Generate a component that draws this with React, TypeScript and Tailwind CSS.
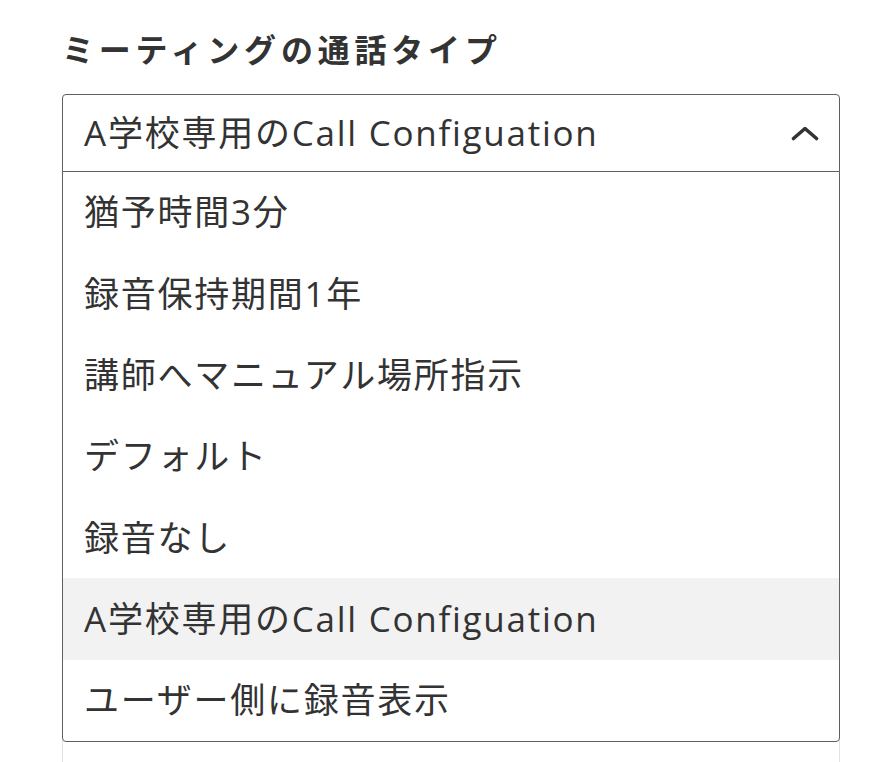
import * as React from "react";

const options = [
  "猶予時間3分",
  "録音保持期間1年",
  "講師へマニュアル場所指示",
  "デフォルト",
  "録音なし",
  "A学校専用のCall Configuation",
  "ユーザー側に録音表示",
];

function ChevronUp() {
  return (
    <svg width="28" height="16" viewBox="0 0 28 16" fill="none">
      <path d="M2.5 13.5L14 3.5L25.5 13.5" stroke="#333333" strokeWidth="3.6" strokeLinecap="round" strokeLinejoin="round" />
    </svg>
  );
}

export default function App() {
  const [selected, setSelected] = React.useState(options[5]);
  const [open, setOpen] = React.useState(true);

  return (
    <div
      className="h-screen overflow-hidden bg-white pt-[28px] pl-[62px] text-[#333333]"
      style={{ fontFamily: '"Open Sans", "Noto Sans CJK JP", sans-serif' }}
    >
      <h1 className="text-[32px] font-bold leading-[44px] tracking-[0.15em] text-[#333333]">ミーティングの通話タイプ</h1>

      <div className="relative mt-[22px] w-[778px]">
        <button
          type="button"
          onClick={() => setOpen(!open)}
          className="flex h-[78px] w-full items-center justify-between rounded-t-[4px] border-[1.5px] border-[#5f5f5f] bg-white pl-[21px] pr-[20px] text-left"
        >
          <span className="text-[35px] tracking-[0.05em]">{selected}</span>
          <ChevronUp />
        </button>

        {/* field underneath, mostly hidden by the open menu */}
        <div className="h-[590px] border-x-[1.5px] border-[#e3e3e3]" />

        {open && (
          <ul className="absolute left-0 right-0 top-[77px] rounded-b-[4px] border-[1.5px] border-[#5f5f5f] bg-white">
            {options.map((o) => (
              <li
                key={o}
                onClick={() => setSelected(o)}
                className={`flex h-[81.3px] items-center pl-[21px] text-[35px] tracking-[0.05em] ${
                  o === selected ? "bg-[#f2f2f2]" : ""
                }`}
              >
                {o}
              </li>
            ))}
          </ul>
        )}
      </div>
    </div>
  );
}
